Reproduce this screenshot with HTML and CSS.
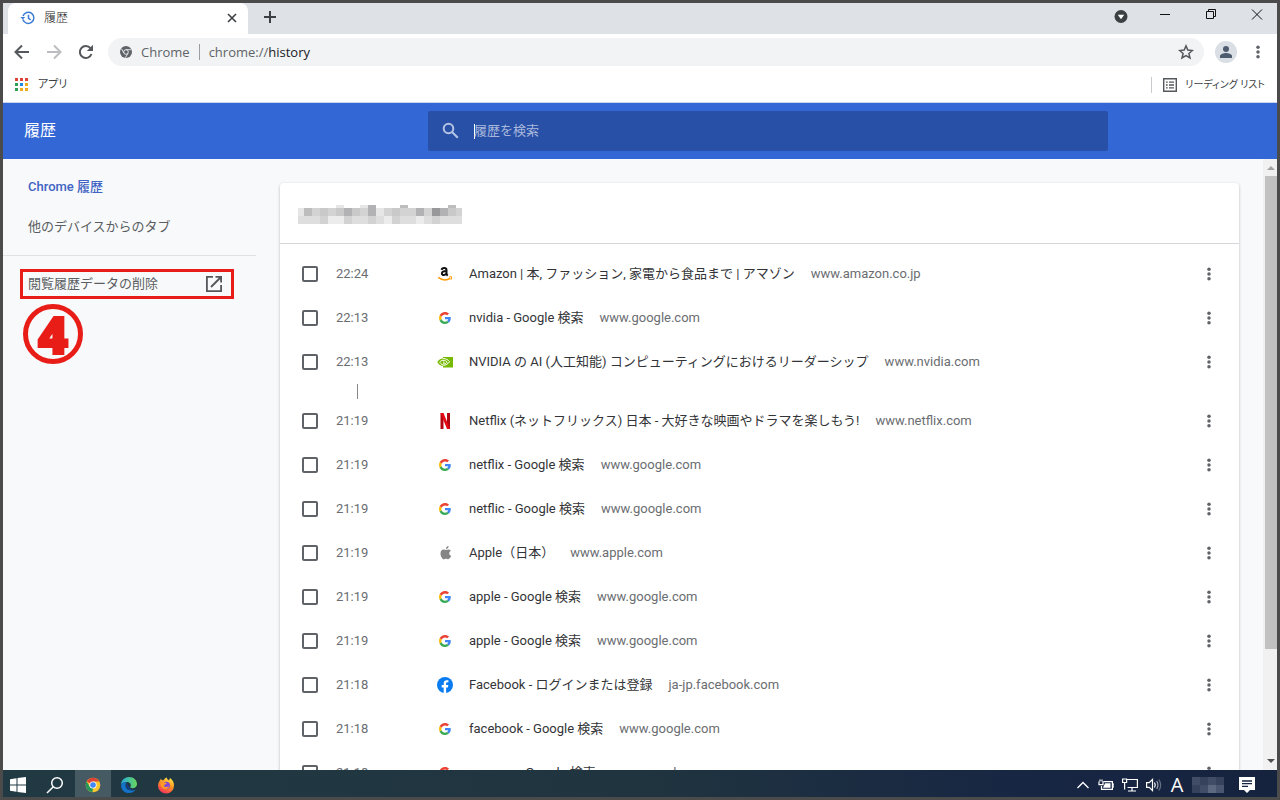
FILE: index.html
```html
<!DOCTYPE html>
<html lang="ja">
<head>
<meta charset="utf-8">
<title>履歴</title>
<link rel="stylesheet" href="styles.css">
</head>
<body>
<svg class="defs" aria-hidden="true">
  <symbol id="google" viewBox="0 0 48 48">
    <path fill="#ea4335" d="M24 9.5c3.5 0 6.700 1.200 9.200 3.600l6.900-6.900C35.900 2.400 30.500 0 24 0 14.600 0 6.500 5.400 2.600 13.200l8 6.200C12.400 13.700 17.700 9.500 24 9.500z"/>
    <path fill="#4285f4" d="M47 24.600c0-1.600-.2-3.100-.4-4.600H24v9h12.900c-.6 3-2.200 5.500-4.700 7.200l7.700 6C44.400 38 47 31.800 47 24.600z"/>
    <path fill="#fbbc05" d="M10.500 28.600c-.5-1.500-.8-3-.8-4.600s.3-3.100.8-4.600l-8-6.200C.9 16.500 0 20.100 0 24s.9 7.500 2.600 10.800l7.900-6.200z"/>
    <path fill="#34a853" d="M24 48c6.500 0 11.900-2.100 15.900-5.800l-7.700-6c-2.200 1.500-4.900 2.300-8.200 2.300-6.300 0-11.600-4.200-13.500-9.900l-8 6.200C6.500 42.600 14.600 48 24 48z"/>
  </symbol>
  <symbol id="amazon" viewBox="0 0 16 16">
    <path fill="none" stroke="#111" stroke-width="2" d="M4.700 3.900Q4.900 2.100 7.200 2.100T9.500 4.200V7.600Q9.500 8.700 10.700 9.600M9.500 5.100Q4.900 5 4.900 7.400C4.900 9.900 8.900 9.600 9.500 7"/>
    <path fill="none" stroke="#f90" stroke-width="1.500" d="M1.200 11.400Q7.200 15.900 13.200 12.300"/>
    <path fill="none" stroke="#f90" stroke-width="1.100" d="M12 11Q14.800 10.400 14.600 11.500T13.800 13.600"/>
  </symbol>
  <symbol id="nvidia" viewBox="0 0 16 16">
    <path fill="#76b900" d="M6 3h10v10.500H6v-1.600c-3.200-.2-5-2.300-5.700-4C1.600 6.200 3.500 4.800 6 4.600z"/>
    <path fill="none" stroke="#fff" stroke-width="1" d="M6 4.600c3-.2 5.300 1.400 6.600 3.100-1.600 2.200-3.900 3.900-6.600 3.500M6 6.400c2-.2 3.300.7 4.200 1.700C9 9.600 7.700 10.200 6 9.800M6 6.200C4.300 6.500 3.200 7.300 2.600 8.100c.6 1 1.800 2.300 3.400 2.900M6 8.200h1.600"/>
  </symbol>
  <symbol id="netflix" viewBox="0 0 16 16">
    <path fill="#b1060f" d="M3.500 0h3v16l-3 .1zM10 0h3v16h-3z"/>
    <path fill="#e50914" d="M3.500 0h3L13 16.100l-3-.2z"/>
  </symbol>
  <symbol id="apple" viewBox="0 0 16 16">
    <path fill="#858585" d="M12.200 8.500c0-1.500 1-2.200 1.700-2.700-.8-1.100-1.900-1.500-3-1.400-1 .1-1.400.6-2 .6s-1.300-.6-2.300-.5C4.800 4.500 3.500 6 3.500 8.400c0 2.500 1.700 5.800 3.300 5.800.9 0 1.200-.5 2.200-.5s1.200.5 2.200.5c1.300 0 2.400-1.800 3-3.400-1.300-.5-2-1.200-2-2.300zM8.900 4.100C8.800 2.600 10 1.200 11.600 1c.1 1.600-1.100 3-2.700 3.100z"/>
  </symbol>
  <symbol id="facebook" viewBox="0 0 16 16">
    <circle cx="8" cy="8" r="8" fill="#0a7cf2"/>
    <path fill="#fff" d="M6.700 16v-5.600H4.700V8h2V6.300c0-2 1.200-3.100 3-3.100.9 0 1.700.1 1.700.1v2h-1c-1 0-1.300.6-1.300 1.200V8h2.200l-.4 2.400H9.100V16z"/>
  </symbol>
  <symbol id="dots" viewBox="0 0 16 16"><g fill="#5f6368"><circle cx="8" cy="2.500" r="2"/><circle cx="8" cy="8" r="2"/><circle cx="8" cy="13.500" r="2"/></g></symbol>
</svg>

<div class="window">
  <header class="tabstrip">
    <div class="tab">
      <svg class="i16" viewBox="0 0 16 16" fill="none" stroke="#3a7bd5" stroke-width="1.500"><path d="M2.900 9.500A5.600 5.600 0 1 0 3 5.900M8.500 4.800V8.400L10.700 9.800"/><path fill="#3a7bd5" stroke="none" d="M.4 6.900H5.200L2.800 9.600z"/></svg>
      <span class="tab-title">履歴</span>
      <button class="icon-btn" aria-label="タブを閉じる"><svg class="i16" viewBox="0 0 16 16" stroke="#3c4043" stroke-width="1.600"><path d="M4 4l8 8M12 4l-8 8"/></svg></button>
    </div>
    <button class="icon-btn newtab" aria-label="新しいタブ"><svg class="i16" viewBox="0 0 16 16" stroke="#3c4043" stroke-width="2"><path d="M8 2v12M2 8h12"/></svg></button>
    <div class="win-controls">
      <button class="icon-btn find" aria-label="タブを検索"><svg class="i16" viewBox="0 0 16 16"><circle cx="8" cy="9.500" r="6.500" fill="#3c4043"/><path fill="#fff" d="M4.800 7.800h6.400L8 12.300z"/></svg></button>
      <button class="icon-btn" aria-label="最小化"><svg class="i16" viewBox="0 0 16 16" stroke="#111"><path d="M3 7.500h10"/></svg></button>
      <button class="icon-btn" aria-label="元に戻す"><svg class="i16" viewBox="0 0 16 16" fill="none" stroke="#111"><path d="M3.500 4.500h7v7h-7zM5.500 4.500v-2h7v7h-2"/></svg></button>
      <button class="icon-btn" aria-label="閉じる"><svg class="i16" viewBox="0 0 16 16" stroke="#111"><path d="M3 2.500l10 10M13 2.500l-10 10"/></svg></button>
    </div>
  </header>

  <div class="toolbar">
    <button class="icon-btn" aria-label="戻る"><svg class="i16" viewBox="0 0 16 16" fill="none" stroke="#54575b" stroke-width="2"><path d="M15 8H2M8 1.500L1.500 8 8 14.500"/></svg></button>
    <button class="icon-btn" aria-label="進む"><svg class="i16" viewBox="0 0 16 16" fill="none" stroke="#bbbdc0" stroke-width="2"><path d="M1 8h13M8 1.500L14.500 8 8 14.500"/></svg></button>
    <button class="icon-btn" aria-label="再読み込み"><svg class="i16" viewBox="0 0 16 16" fill="none" stroke="#54575b" stroke-width="2"><path d="M13.500 10A6 6 0 1 1 12.500 4.200"/><path fill="#54575b" stroke="none" d="M15 .8V7H8.800z"/></svg></button>
    <div class="omnibox">
      <svg class="i12" viewBox="0 0 14 14"><circle cx="7" cy="7" r="7" fill="#5f6368"/><g fill="none" stroke="#f1f3f4" stroke-width="1"><circle cx="7" cy="7" r="2.700"/><path d="M7 4.300h6M4.700 8.400L1.700 3.200M9.300 8.400L6.300 13.600"/></g></svg>
      <span class="scheme">Chrome</span>
      <span class="bar"></span>
      <span class="url">chrome://<b>history</b></span>
      <svg class="i16 star" viewBox="0 0 16 16" fill="none" stroke="#54575b" stroke-width="1.500"><path d="M8 1.900l1.800 4.200 4.600.4-3.500 3 1.100 4.500L8 11.600 4 14l1.100-4.500-3.500-3 4.600-.4z"/></svg>
    </div>
    <button class="icon-btn avatar" aria-label="プロフィール"><svg class="i14" viewBox="0 0 14 14" fill="#4e5b6f"><circle cx="7" cy="4" r="3"/><path d="M1 13v-2c0-2 4-3 6-3s6 1 6 3v2z"/></svg></button>
    <button class="icon-btn" aria-label="メニュー"><svg class="i14"><use href="#dots"/></svg></button>
  </div>

  <nav class="bookmarks">
    <a href="#" class="bookmark">
      <svg class="i14" viewBox="0 0 14 14"><g fill="#db4437"><path d="M1 0h3v3H1zM6 0h3v3H6zM11 0h3v3h-3z"/></g><g fill="#2f9e58"><path d="M1 5h3v3H1zM1 10h3v3H1z"/></g><path fill="#1e88e5" d="M6 5h3v3H6z"/><path fill="#efab1c" d="M11 5h3v3h-3zM6 10h3v3H6zM11 10h3v3h-3z"/></svg>
      アプリ</a>
    <a href="#" class="bookmark reading">
      <svg class="i14" viewBox="0 0 14 14"><path fill="none" stroke="#54575b" stroke-width="1.400" d="M.7.700h12.600v12.600H.7z"/><path stroke="#54575b" stroke-width="1.300" d="M3 4.200h1.700M6 4.200h5M3 7h1.700M6 7h5M3 9.800h1.700M6 9.800h5"/></svg>
      リーディング リスト</a>
  </nav>

  <div class="apphead">
    <h1>履歴</h1>
    <div class="search-area">
      <label class="search">
        <svg class="i18" viewBox="0 0 18 18" fill="none" stroke="#b5c4e4" stroke-width="2"><circle cx="6.500" cy="6.500" r="4.800"/><path d="M10 10l5.800 5.800"/></svg>
        <span class="caret"></span>
        <input type="search" aria-label="履歴を検索" placeholder="履歴を検索">
      </label>
    </div>
  </div>

  <div class="page">
    <aside class="sidebar">
      <a href="#" class="side-link active">Chrome 履歴</a>
      <a href="#" class="side-link">他のデバイスからのタブ</a>
      <hr>
      <a href="#" class="clear">閲覧履歴データの削除
        <svg class="i16" viewBox="0 0 16 16" fill="none" stroke="#54575b" stroke-width="1.800"><path d="M7 .9H.9v14.200h14.200V9M9.500.9h5.600v5.600M15 1L5 11"/></svg></a>
      <div class="step">4</div>
    </aside>

    <main class="main">
      <section class="card">
        <div class="card-head">
          <svg class="mosaic" viewBox="0 0 164 19" shape-rendering="crispEdges">
            <path fill="#e6e6e6" d="M38 0h8v3h-8zM62 0h8v3h-8zM0 3h6v8H0zM78 3h8v8h-8z"/>
            <path fill="#bdbdbd" d="M6 3h8v8H6zM102 0h8v3h-8zM150 0h8v3h-8z"/>
            <path fill="#d3d3d3" d="M14 3h8v8h-8zM30 3h8v8h-8zM62 3h8v8h-8zM86 3h8v8h-8zM102 3h16v8h-16zM126 3h8v8h-8zM158 3h6v8h-6z"/>
            <path fill="#c9c9c9" d="M22 3h8v8h-8zM38 3h8v8h-8zM54 3h8v8h-8zM94 3h8v8h-8zM150 3h8v8h-8z"/>
            <path fill="#b2b2b4" d="M46 3h8v8h-8zM70 0h8v11h-8zM118 3h8v8h-8zM142 3h8v8h-8z"/>
            <path fill="#98989a" d="M134 3h8v8h-8z"/>
            <path fill="#dedede" d="M0 11h22v8H0zM54 11h16v8H54zM78 11h8v8h-8zM102 11h16v8h-16zM126 11h8v8h-8zM142 11h22v8h-22z"/>
            <path fill="#d2d2d2" d="M22 11h8v8h-8zM46 11h8v8h-8zM70 11h8v8h-8zM94 11h8v8h-8zM134 11h8v8h-8z"/>
            <path fill="#ececec" d="M30 11h16v8H30zM86 11h8v8h-8zM118 11h8v8h-8z"/>
          </svg>
        </div>
        <ul class="rows">
          <li class="row"><input type="checkbox" aria-label="Amazon"><time>22:24</time><svg class="i16"><use href="#amazon"/></svg><a href="#">Amazon | 本, ファッション, 家電から食品まで | アマゾン</a><span class="domain">www.amazon.co.jp</span><button class="icon-btn more" aria-label="操作"><svg class="i14"><use href="#dots"/></svg></button></li>
          <li class="row"><input type="checkbox" aria-label="nvidia - Google"><time>22:13</time><svg class="i16 g"><use href="#google"/></svg><a href="#">nvidia - Google 検索</a><span class="domain">www.google.com</span><button class="icon-btn more" aria-label="操作"><svg class="i14"><use href="#dots"/></svg></button></li>
          <li class="row"><input type="checkbox" aria-label="NVIDIA"><time>22:13</time><svg class="i16"><use href="#nvidia"/></svg><a href="#">NVIDIA の AI (人工知能) コンピューティングにおけるリーダーシップ</a><span class="domain">www.nvidia.com</span><button class="icon-btn more" aria-label="操作"><svg class="i14"><use href="#dots"/></svg></button></li>
          <li class="gap"></li>
          <li class="row"><input type="checkbox" aria-label="Netflix"><time>21:19</time><svg class="i16"><use href="#netflix"/></svg><a href="#">Netflix (ネットフリックス) 日本 - 大好きな映画やドラマを楽しもう!</a><span class="domain">www.netflix.com</span><button class="icon-btn more" aria-label="操作"><svg class="i14"><use href="#dots"/></svg></button></li>
          <li class="row"><input type="checkbox" aria-label="netflix - Google"><time>21:19</time><svg class="i16 g"><use href="#google"/></svg><a href="#">netflix - Google 検索</a><span class="domain">www.google.com</span><button class="icon-btn more" aria-label="操作"><svg class="i14"><use href="#dots"/></svg></button></li>
          <li class="row"><input type="checkbox" aria-label="netflic - Google"><time>21:19</time><svg class="i16 g"><use href="#google"/></svg><a href="#">netflic - Google 検索</a><span class="domain">www.google.com</span><button class="icon-btn more" aria-label="操作"><svg class="i14"><use href="#dots"/></svg></button></li>
          <li class="row"><input type="checkbox" aria-label="Apple"><time>21:19</time><svg class="i16"><use href="#apple"/></svg><a href="#">Apple（日本）</a><span class="domain">www.apple.com</span><button class="icon-btn more" aria-label="操作"><svg class="i14"><use href="#dots"/></svg></button></li>
          <li class="row"><input type="checkbox" aria-label="apple - Google"><time>21:19</time><svg class="i16 g"><use href="#google"/></svg><a href="#">apple - Google 検索</a><span class="domain">www.google.com</span><button class="icon-btn more" aria-label="操作"><svg class="i14"><use href="#dots"/></svg></button></li>
          <li class="row"><input type="checkbox" aria-label="apple - Google"><time>21:19</time><svg class="i16 g"><use href="#google"/></svg><a href="#">apple - Google 検索</a><span class="domain">www.google.com</span><button class="icon-btn more" aria-label="操作"><svg class="i14"><use href="#dots"/></svg></button></li>
          <li class="row"><input type="checkbox" aria-label="Facebook"><time>21:18</time><svg class="i16"><use href="#facebook"/></svg><a href="#">Facebook - ログインまたは登録</a><span class="domain">ja-jp.facebook.com</span><button class="icon-btn more" aria-label="操作"><svg class="i14"><use href="#dots"/></svg></button></li>
          <li class="row"><input type="checkbox" aria-label="facebook - Google"><time>21:18</time><svg class="i16 g"><use href="#google"/></svg><a href="#">facebook - Google 検索</a><span class="domain">www.google.com</span><button class="icon-btn more" aria-label="操作"><svg class="i14"><use href="#dots"/></svg></button></li>
          <li class="row"><input type="checkbox" aria-label="amazon - Google"><time>21:18</time><svg class="i16 g"><use href="#google"/></svg><a href="#">amazon - Google 検索</a><span class="domain">www.google.com</span><button class="icon-btn more" aria-label="操作"><svg class="i14"><use href="#dots"/></svg></button></li>
        </ul>
      </section>
    </main>
    <div class="scrollbar">
      <svg viewBox="0 0 14 17"><path fill="#a3a3a3" d="M4 11h8L8 7z"/></svg>
      <div class="track"><div class="thumb"></div></div>
      <svg viewBox="0 0 14 17"><path fill="#505050" d="M4 6h8l-4 4z"/></svg>
    </div>
  </div>

  <footer class="taskbar">
    <button class="task" aria-label="スタート"><svg class="i16" viewBox="0 0 16 16" fill="#fff"><path d="M0 2.200L6.500 1.300V7.500H0zM7.500 1.100L16 0v7.500H7.500zM0 8.500h6.500v6.200L0 13.800zM7.500 8.500H16V16l-8.500-1.100z"/></svg></button>
    <button class="task find-task" aria-label="検索"><svg class="i18" viewBox="0 0 18 18" fill="none" stroke="#fff" stroke-width="1.500"><circle cx="11" cy="7" r="5.300"/><path d="M7.300 10.800L1 17"/></svg></button>
    <button class="task on" aria-label="Chrome"><svg class="i16" viewBox="0 0 16 16"><circle cx="8" cy="8" r="7.300" fill="#fbc52f"/><path fill="#dc4437" d="M8 8L1.700 4.400A7.300 7.300 0 0 1 14.300 4.400H8z"/><path fill="#26975a" d="M1.700 4.400L4.900 9.800 8 11.200 7.400 15.300A7.300 7.300 0 0 1 1.700 4.400z"/><circle cx="8" cy="8" r="3.600" fill="#fff"/><circle cx="8" cy="8" r="2.800" fill="#4285f4"/></svg></button>
    <button class="task" aria-label="Edge"><svg class="i18" viewBox="0 0 18 18"><defs><linearGradient id="eg"><stop offset="0" stop-color="#26a9e0"/><stop offset="1" stop-color="#6bd85b"/></linearGradient></defs><path fill="url(#eg)" d="M1 8.300C1.500 4 5 1 9 1c5 0 8 3.600 8 7 0 2.600-2 4.200-4.300 4.200-2 0-2.800-.8-2.400-1.500C11.800 8.500 10 5.900 7 5.900 4 5.900 1.900 7 1 8.300z"/><path fill="#1273c9" d="M1 8.700C2 7 4.500 6 7 6.400 4.600 7.500 5 12.500 9 14c2.500.9 4.700.4 6.600-.6C14.200 15.600 11.800 17 9 17c-4.800 0-8.200-3.600-8-8.300z"/><path fill="#123e94" d="M7.300 7.500C5.500 9 6.600 13.300 10.500 14c2 .4 3.700 0 5.100-.6-1 .2-2.300.4-3.700 0C9.600 12.600 8 10.500 7.300 7.500z"/></svg></button>
    <button class="task" aria-label="Firefox"><svg class="i18" viewBox="0 0 18 18"><defs><linearGradient id="ff" x1=".8" y1="0" x2=".3" y2="1"><stop offset="0" stop-color="#fff044"/><stop offset=".5" stop-color="#ff8a24"/><stop offset="1" stop-color="#ef2f60"/></linearGradient></defs><path fill="url(#ff)" d="M4 2.500C4.200 4 5 4.300 6.400 4.300 7.500 2.500 9 1.700 10 1.500 9.500 3 11 3.500 12 4.500L13 2c3 2 4 5 4 7.500A8 8 0 0 1 1 9.700C1 6.500 2.500 5.500 4 2.500z"/><circle cx="9.300" cy="9.300" r="3.600" fill="#8048d8"/><path fill="#ff9b27" d="M3.500 7C6 5.500 7.500 7 9.800 7 9 8.600 7.300 8.300 7 9.500c0 2 3.300 2 5 .5-1 5-8.500 4-8.500-3z"/></svg></button>

    <div class="tray">
      <svg class="tray-sm" viewBox="0 0 14 16" fill="none" stroke="#fff" stroke-width="1.300"><path d="M1.500 11L7 5.500 12.500 11"/></svg>
      <svg class="i16" viewBox="0 0 16 16" fill="none" stroke="#fff" stroke-width="1.200"><path d="M5.500 4.600h8.900v7.800H3.500V9M1 4.500v3.200h4V4.500M2 4.500V2.500M4 4.500V2.500M14.500 7H16v3h-1.500"/><path fill="#fff" stroke="none" d="M7 6.200h5.500v4.600H5z"/></svg>
      <svg class="i16" viewBox="0 0 16 16" fill="none" stroke="#fff" stroke-width="1.200"><path d="M5 2.500h10.400v8H5.600M10 10.500v3.400M6 14h8M.6 2h4v3.500h-4zM2.600 5.500v7"/></svg>
      <svg class="i16" viewBox="0 0 16 16" fill="none" stroke="#fff" stroke-width="1.200"><path d="M.6 5.700h2.600L6.500 2.500v11L3.200 10.300H.6zM8.500 5.500q1.500 2.500 0 5"/><path opacity=".6" d="M10.700 4q2.500 4 0 8"/><path opacity=".35" d="M12.900 2.500q3.500 5.500 0 11"/></svg>
      <span class="ime">A</span>
      <svg class="clock" viewBox="0 0 32 16" shape-rendering="crispEdges"><path fill="#36425c" d="M0 0h32v16H0z"/><path fill="#414d67" d="M0 0h8v8H0zM16 0h8v8h-8zM8 8h8v8H8z"/><path fill="#5c6780" d="M16 8h8v8h-8z"/><path fill="#4a566f" d="M24 8h8v8h-8z"/></svg>
      <svg class="i16 note" viewBox="0 0 16 16"><path fill="#fff" d="M0 0h16v13h-5l-3 3-3-3H0z"/><path stroke="#16233f" stroke-width="1.300" d="M3 4h10M3 6.700h10M3 9.400h6"/></svg>
    </div>
  </footer>
</div>
</body>
</html>
```
FILE: styles.css
```css
* { box-sizing: border-box; }
body { margin: 0; font: 13px/20px Roboto, "Noto Sans CJK JP", sans-serif; color: #333; }
a { color: inherit; text-decoration: none; }
svg { display: block; flex: none; }
.defs { position: absolute; width: 0; height: 0; }
.i12 { width: 12px; height: 12px; }
.i14 { width: 14px; height: 14px; }
.i16 { width: 16px; height: 16px; }
.i18 { width: 18px; height: 18px; }
.icon-btn { display: flex; align-items: center; justify-content: center; flex: none; border: 0; padding: 0; background: none; }

.window { display: flex; flex-direction: column; height: 100vh; overflow: hidden; border: 3px solid #4b4b4b; background: #fff; }

.tabstrip { display: flex; flex: none; height: 31px; padding-left: 5px; background: #dee1e6; }
.tab { display: flex; align-items: center; gap: 8px; width: 240px; padding: 0 8px 2px 12px; border-radius: 8px 8px 0 0; background: #fff; }
.tab-title { flex: 1; font-size: 12px; font-weight: 300; color: #222; }
.newtab { width: 44px; padding-bottom: 3px; }
.win-controls { display: flex; align-items: flex-start; gap: 30px; margin-left: auto; padding: 4px 12px 0 0; }
.find { margin-right: -2px; }

.toolbar { display: flex; align-items: center; flex: none; gap: 16px; height: 36px; padding: 0 12px 0 11px; }
.omnibox { display: flex; align-items: center; flex: 1; gap: 9px; height: 28px; margin-left: -2px; padding: 0 10px 0 12px; border-radius: 14px; background: #f1f3f4; font-family: "Open Sans", "Noto Sans", sans-serif; font-size: 13px; color: #5f6368; }
.bar { width: 1px; height: 16px; background: #9a9da1; }
.url b { font-weight: 400; color: #202124; }
.star { margin-left: auto; }
.avatar { width: 22px; height: 22px; margin: 0 -2px 0 -5px; border-radius: 11px; background: #dadfe5; }

.bookmarks { display: flex; align-items: center; justify-content: space-between; flex: none; height: 33px; padding: 0 12px 2px 11px; border-bottom: 1px solid #c9d5ef; }
.bookmark { display: flex; align-items: center; gap: 10px; font-size: 11px; color: #3c4043; font-feature-settings: "palt"; }
.reading { gap: 8px; height: 16px; padding-left: 11px; border-left: 1px solid #c8cacd; font-size: 10px; }

.apphead { display: flex; align-items: center; flex: none; height: 56px; background: #3367d6; }
.apphead h1 { width: 256px; margin: 0; padding-left: 21px; font-size: 16px; font-weight: 400; color: #fff; }
.search-area { display: flex; justify-content: center; flex: 1; }
.search { display: flex; align-items: center; width: 100%; max-width: 680px; height: 40px; padding-left: 14px; border-radius: 2px; background: #2850a7; }
.caret { width: 1px; height: 15px; margin: 0 -1px 0 14px; background: #fff; }
.search input { flex: 1; border: 0; padding: 0; outline: 0; background: none; font: inherit; color: #fff; }
.search input::placeholder { color: #a9b9dc; opacity: 1; }

.page { display: flex; flex: 1; min-height: 0; background: #f8f9fa; }
.sidebar { width: 253px; flex: none; padding-top: 8px; color: #5a5d61; }
.side-link { display: flex; align-items: center; height: 40px; padding-left: 25px; }
.active { font-weight: 500; color: #3f64c4; }
.sidebar hr { margin: 8px 0 13px; border: 0; border-top: 1px solid #e0e2e5; }
.clear { display: flex; align-items: center; justify-content: space-between; height: 30px; margin: 0 22px 0 17px; padding: 0 9px 0 5px; border: 3px solid #e91d18; }
.step { display: flex; align-items: center; justify-content: center; width: 60px; height: 60px; margin: 5px 0 0 20px; border: 5px solid #e91d18; border-radius: 50%; font: 800 52px/50px "Open Sans", Roboto, sans-serif; color: #e91d18; -webkit-text-stroke: 2px #e91d18; }

.main { flex: 1; min-width: 0; padding: 24px 24px 0; overflow: hidden; }
.card { border-radius: 4px 4px 0 0; background: #fff; box-shadow: 0 1px 3px rgba(60, 64, 67, .35); }
.card-head { display: flex; align-items: center; height: 61px; padding: 2px 0 0 18px; border-bottom: 1px solid #d4d6d9; }
.mosaic { width: 164px; height: 19px; }
.rows { margin: 0; padding: 8px 0; list-style: none; }
.row { display: flex; align-items: center; height: 44px; padding: 0 19px 0 22px; white-space: nowrap; }
.row input { appearance: none; flex: none; width: 16px; height: 16px; margin: 0 18px 0 0; border: 2px solid #5f6368; border-radius: 2px; }
.row time { width: 101px; color: #6a6d71; }
.row a { margin: 0 16px; color: #333437; }
.row .g { padding: 2px; }
.domain { color: #6a6d71; }
.more { width: 22px; margin-left: auto; }
.gap { width: 1px; height: 15px; margin-left: 77px; background: #85888b; }

.scrollbar { display: flex; flex-direction: column; width: 14px; flex: none; background: #f1f1f1; }
.scrollbar svg { width: 14px; height: 17px; }
.track { flex: 1; padding-left: 2px; }
.thumb { height: 82%; background: #c1c1c1; }

.taskbar { display: flex; flex: none; height: 27px; background: linear-gradient(90deg, #213942, #20343f 50%, #172643 80%, #16233f); }
.task { display: flex; align-items: center; justify-content: center; width: 37px; border: 0; padding: 2px 1px 0 0; background: none; }
.task:first-child { width: 35px; padding-right: 5px; }
.find-task { padding-right: 4px; }
.on { width: 36px; background: #465a63; }
.tray { display: flex; align-items: center; gap: 8px; margin-left: auto; padding: 3px 22px 0 0; }
.tray-sm { width: 14px; height: 16px; }
.ime { width: 14px; font: 20px/20px "Open Sans", sans-serif; color: #fff; text-align: center; }
.clock { width: 32px; height: 16px; }
.note { margin-left: 7px; }
```
